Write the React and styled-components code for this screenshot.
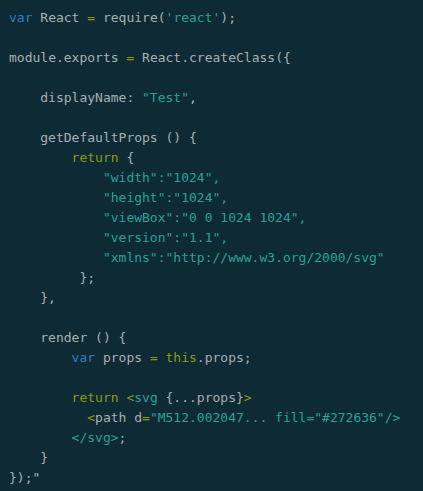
import React from "react";
import styled, { createGlobalStyle } from "styled-components";

const Global = createGlobalStyle`
  html, body { margin: 0; padding: 0; background: #0e2a35; }
  #root { min-height: 100vh; background: #0e2a35; }
`;

const Editor = styled.pre`
  margin: 0;
  padding: 8px 9px;
  font-family: "DejaVu Sans Mono", "Liberation Mono", monospace;
  font-size: 13px;
  line-height: 20px;
  color: #a6b1b2;
  background: #0e2a35;
  min-height: 491px;
  box-sizing: border-box;
`;

const Line = styled.div`
  height: 20px;
  padding-left: ${(p) => (p.$indent || 0)}ch;
  white-space: pre;
`;

const colors = {
  kw: "#2f7fc1",
  ctl: "#8a9c10",
  str: "#2aa198",
  plain: "#a6b1b2",
};

const Tok = styled.span`
  color: ${(p) => colors[p.$k] || colors.plain};
`;

const K = ({ c }) => <Tok $k="kw">{c}</Tok>;
const G = ({ c }) => <Tok $k="ctl">{c}</Tok>;
const S = ({ c }) => <Tok $k="str">{c}</Tok>;

export default function App() {
  return (
    <>
      <Global />
      <Editor>
        <Line>
          <K c="var" /> React <G c="=" /> require(<S c="'react'" />);
        </Line>
        <Line />
        <Line>
          module.exports <G c="=" /> React.createClass{"({"}
        </Line>
        <Line />
        <Line $indent={4}>
          displayName: <S c={'"Test"'} />,
        </Line>
        <Line />
        <Line $indent={4}>getDefaultProps () {"{"}</Line>
        <Line $indent={8}>
          <G c="return" /> {"{"}
        </Line>
        <Line $indent={12}>
          <S c={'"width":"1024",'} />
        </Line>
        <Line $indent={12}>
          <S c={'"height":"1024",'} />
        </Line>
        <Line $indent={12}>
          <S c={'"viewBox":"0 0 1024 1024",'} />
        </Line>
        <Line $indent={12}>
          <S c={'"version":"1.1",'} />
        </Line>
        <Line $indent={12}>
          <S c={'"xmlns":"http://www.w3.org/2000/svg"'} />
        </Line>
        <Line $indent={9}>{"};"}</Line>
        <Line $indent={4}>{"},"}</Line>
        <Line />
        <Line $indent={4}>render () {"{"}</Line>
        <Line $indent={8}>
          <K c="var" /> props <G c="=" /> <G c="this" />.props;
        </Line>
        <Line />
        <Line $indent={8}>
          <G c="return" /> <G c="<" />
          <S c="svg" /> {"{...props}"}
          <G c=">" />
        </Line>
        <Line $indent={10}>
          <G c="<" />
          path d<G c="=" />
          <S c={'"M512.002047... fill="#272636"/>'} />
        </Line>
        <Line $indent={8}>
          <S c="</svg>" />;
        </Line>
        <Line $indent={4}>{"}"}</Line>
        <Line>{'});"'}</Line>
      </Editor>
    </>
  );
}
